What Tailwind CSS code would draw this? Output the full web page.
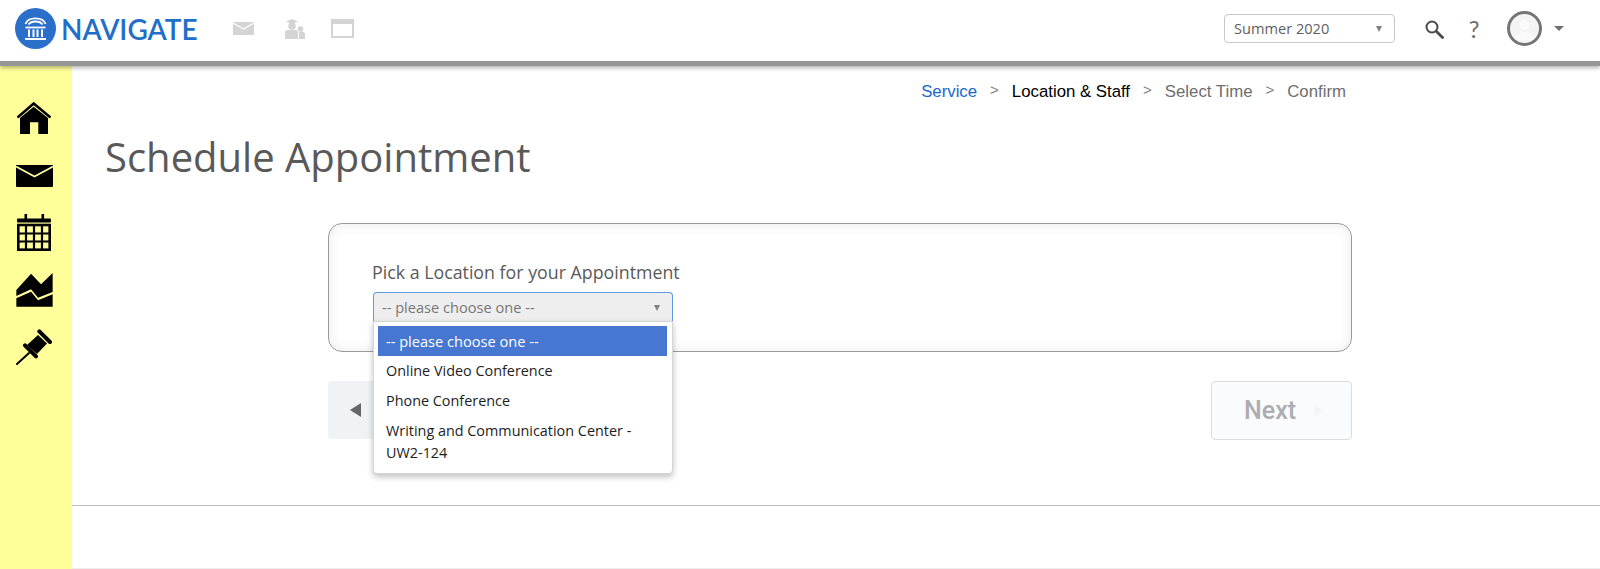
<!DOCTYPE html>
<html><head><meta charset="utf-8"><script src="https://cdn.jsdelivr.net/npm/@tailwindcss/browser@4"></script></head>
<body class="m-0 bg-white overflow-hidden font-['Open_Sans',sans-serif]">
<div class="w-[1600px] h-[569px] flex flex-col overflow-hidden relative">
  <header class="relative z-10 h-[66px] shrink-0 bg-white border-b-[5px] border-[#969696] shadow-[0_2px_4px_rgba(0,0,0,0.3)] flex items-center pb-[4px] pl-[15px] pr-[36px]">
    <svg class="w-[41px] h-[41px] shrink-0" viewBox="0 0 41 41"><circle cx="20.5" cy="20.5" r="20.5" fill="#2a6fca"/><g fill="none" stroke="#fff" stroke-width="1.800"><path d="M10.500 16 C13 8.500 28 8.500 30.500 16"/><path d="M13.500 16.500 C16 12.500 25 12.500 27.500 16.500"/><path d="M10.500 19.500h20"/><path d="M14 21.500v7.500M18.500 21.500v7.500M22.500 21.500v7.500M27 21.500v7.500" stroke-width="2"/><path d="M10 31h21" stroke-width="2"/></g></svg>
    <span class="ml-[5px] text-[28px] leading-none font-['Lato',sans-serif] font-semibold text-[#1f6fc9]">NAVIGATE</span>
    <div class="flex items-center ml-[35px] gap-[31px]">
      <svg class="w-[21px] h-[13px]" viewBox="0 0 21 13"><rect width="21" height="13" fill="#d4d4d4"/><path d="M0 1l10.500 6L21 1" fill="none" stroke="#fff" stroke-width="1.200"/></svg>
      <svg class="w-[20px] h-[20px]" viewBox="0 0 20 20" fill="#d4d4d4"><path d="M1 2.500L7 0l6 2.500L7 5z"/><circle cx="7" cy="7" r="3.800"/><path d="M0 20v-6c0-2 1-3 3-3h7c2 0 3 1 3 3v6z"/><circle cx="15.500" cy="10" r="2.800"/><path d="M14 20v-6c0-.8-.2-1-.5-1.500H17c2 0 3 1 3 3v4.500z"/></svg>
      <svg class="w-[23px] h-[19px] -ml-[5px]" viewBox="0 0 23 19"><rect x="1" y="1" width="21" height="17" fill="none" stroke="#d4d4d4" stroke-width="2"/><rect x="0" y="0" width="23" height="5" fill="#d4d4d4"/></svg>
    </div>
    <div class="ml-auto flex items-center">
      <div class="w-[171px] h-[29px] rounded-[4px] border border-[#c9c9c9] flex items-center justify-between pl-[9px] pr-[12px] text-[14.6px] text-[#5f5f5f]">Summer 2020<span class="w-0 h-0 border-x-[3.5px] border-x-transparent border-t-[6px] border-t-[#808080]"></span></div>
      <svg class="w-[20px] h-[20px] ml-[29px]" viewBox="0 0 20 20" fill="none" stroke="#4a4a4a"><circle cx="8" cy="8" r="5.500" stroke-width="2"/><path d="M12.500 12.500l6 6" stroke-width="2.800" stroke-linecap="round"/></svg>
      <span class="ml-[24px] w-[12px] text-center text-[24px] leading-none text-[#6e6e6e] font-['Lato',sans-serif] font-normal">?</span>
      <div class="ml-[27px] w-[35px] h-[35px] rounded-full border-[3px] border-[#757575] bg-[#f4f4f4] flex items-center justify-center overflow-hidden"><svg class="w-[29px] h-[29px]" viewBox="0 0 29 29" fill="#fbfbfb"><circle cx="14.500" cy="11" r="5"/><path d="M5 26c0-6 5-8 9.500-8s9.500 2 9.500 8z"/></svg></div>
      <span class="ml-[12px] w-0 h-0 border-x-[5.500px] border-x-transparent border-t-[5px] border-t-[#707070]"></span>
    </div>
  </header>
  <div class="flex-1 flex min-h-0">
    <aside class="w-[72px] shrink-0 bg-[#ffff99] flex flex-col pr-[4px] pt-[24px]">
      <div class="h-[57px] flex items-center justify-center"><svg class="w-[34px] h-[33px]" viewBox="0 0 34 33"><path d="M0.500 15.500L16.700 1.500l16.800 14" fill="none" stroke="#000" stroke-width="2.600"/><path d="M3 16L16.700 4.700 31 16v16H21.300V20.300H13V32H3z" fill="#000"/></svg></div>
      <div class="h-[57px] flex items-center justify-center"><svg class="w-[37px] h-[22px]" viewBox="0 0 37 22"><path d="M0 0h37v21a1 1 0 0 1-1 1H1a1 1 0 0 1-1-1z" fill="#000"/><path d="M0 1.500l18.500 10L37 1.500" fill="none" stroke="#ffff99" stroke-width="1.600"/></svg></div>
      <div class="h-[57px] flex items-center justify-center"><svg class="w-[34px] h-[37px]" viewBox="0 0 34 37"><path d="M7.500 0h2.600v6H7.500zM24.500 0h2.600v6h-2.600z" fill="#000"/><rect x="0" y="4.500" width="34" height="4" rx="1" fill="#000"/><rect x="1.300" y="11" width="31.400" height="24.700" fill="none" stroke="#000" stroke-width="2.600"/><path d="M1 19.500h32M1 27.500h32M9 11v25M17 11v25M25 11v25" stroke="#000" stroke-width="2.200"/></svg></div>
      <div class="h-[57px] flex items-center justify-center"><svg class="w-[37px] h-[34px]" viewBox="0 0 36.300 34"><path d="M0 17L14.700.7 24.700 11.300 36.300 0V19L21.700 24.700 14.700 16.300 0 23z" fill="#000"/><path d="M0 25.300L14.700 18.700 21.700 27.300 36.300 21.300V33.700H0z" fill="#000"/></svg></div>
      <div class="h-[57px] flex items-center justify-center"><svg class="w-[36px] h-[36px]" viewBox="0 0 36 36"><path d="M1 35L13 24" stroke="#000" stroke-width="2" stroke-linecap="round"/><path d="M23.300 2.300L34 13M9 16.300L20 27.300" stroke="#000" stroke-width="4" stroke-linecap="round" fill="none"/><path d="M22 6l9 8.500L21 25l-10-9z" fill="#000"/></svg></div>
    </aside>
    <main class="flex-1 flex flex-col min-w-0 border-b border-[#eeeeee]">
      <nav class="h-[49px] flex items-center justify-end pr-[254px] pt-[3px] text-[16.800px] font-['Liberation_Sans',sans-serif] text-[#6e6e6e] shrink-0">
        <span class="text-[#1a68c9]">Service</span><span class="mx-[13px] -mt-[3px] text-[#808080] text-[15px]">&gt;</span><span class="text-black">Location &amp; Staff</span><span class="mx-[13px] -mt-[3px] text-[#808080] text-[15px]">&gt;</span><span>Select Time</span><span class="mx-[13px] -mt-[3px] text-[#808080] text-[15px]">&gt;</span><span>Confirm</span>
      </nav>
      <h1 class="ml-[33px] mt-[15px] text-[40px] leading-[54px] font-normal text-[#595959]">Schedule Appointment</h1>
      <div class="ml-[256px] w-[1024px] mt-[39px]">
        <section class="relative h-[129px] rounded-[14px] border border-[#9a9a9a] bg-white shadow-[inset_0_0_14px_rgba(0,0,0,0.08)] pl-[43px] pt-[37px]">
          <label class="block text-[17.800px] leading-[22px] text-[#5a5a5a]">Pick a Location for your Appointment</label>
          <div class="mt-[9px] ml-[1px] w-[300px] h-[31px] rounded-t-[4px] border border-b-0 border-[#5f9bea] bg-[#eeeeee] flex items-center justify-between pl-[8px] pr-[12px] text-[14.600px] text-[#777777]">-- please choose one --<span class="w-0 h-0 border-x-[3.5px] border-x-transparent border-t-[6px] border-t-[#808080]"></span></div>
          <div class="absolute z-20 left-[44px] top-[97px] w-[300px] h-[153px] rounded-b-[4px] bg-white border border-[#d6d6d6] shadow-[0_3px_6px_rgba(0,0,0,0.25)] pt-[4px] pl-[4px] pr-[5px] text-[14.400px] leading-[22px] text-[#1d1d1d]">
            <div class="h-[30px] pl-[8px] pr-[7px] bg-[#4777d1] text-white flex items-center font-medium text-[14.600px]">-- please choose one --</div>
            <div class="h-[30px] pl-[8px] pr-[7px] flex items-center">Online Video Conference</div>
            <div class="h-[30px] pl-[8px] pr-[7px] flex items-center">Phone Conference</div>
            <div class="pl-[8px] pr-[7px] pt-[4px]">Writing and Communication Center - UW2-124</div>
          </div>
        </section>
        <div class="mt-[29px] flex justify-between items-start">
          <button class="w-[140px] h-[58px] rounded-[4px] bg-[#f1f2f4] flex items-center pl-[22px]"><span class="w-0 h-0 border-y-[7px] border-y-transparent border-r-[11px] border-r-[#666666]"></span></button>
          <button class="w-[141px] h-[59px] rounded-[4px] border border-[#dcdcdc] bg-[#fafbfd] flex items-center pl-[32px] text-[25px] font-medium font-['Roboto',sans-serif] text-[#abadb1]">Next<span class="ml-[18px] w-0 h-0 border-y-[6px] border-y-transparent border-l-[10px] border-l-[#f4f5f8]"></span></button>
        </div>
      </div>
      <div class="mt-[65px] h-px bg-[#bdbdbd]"></div>
    </main>
  </div>
</div>
</body></html>
